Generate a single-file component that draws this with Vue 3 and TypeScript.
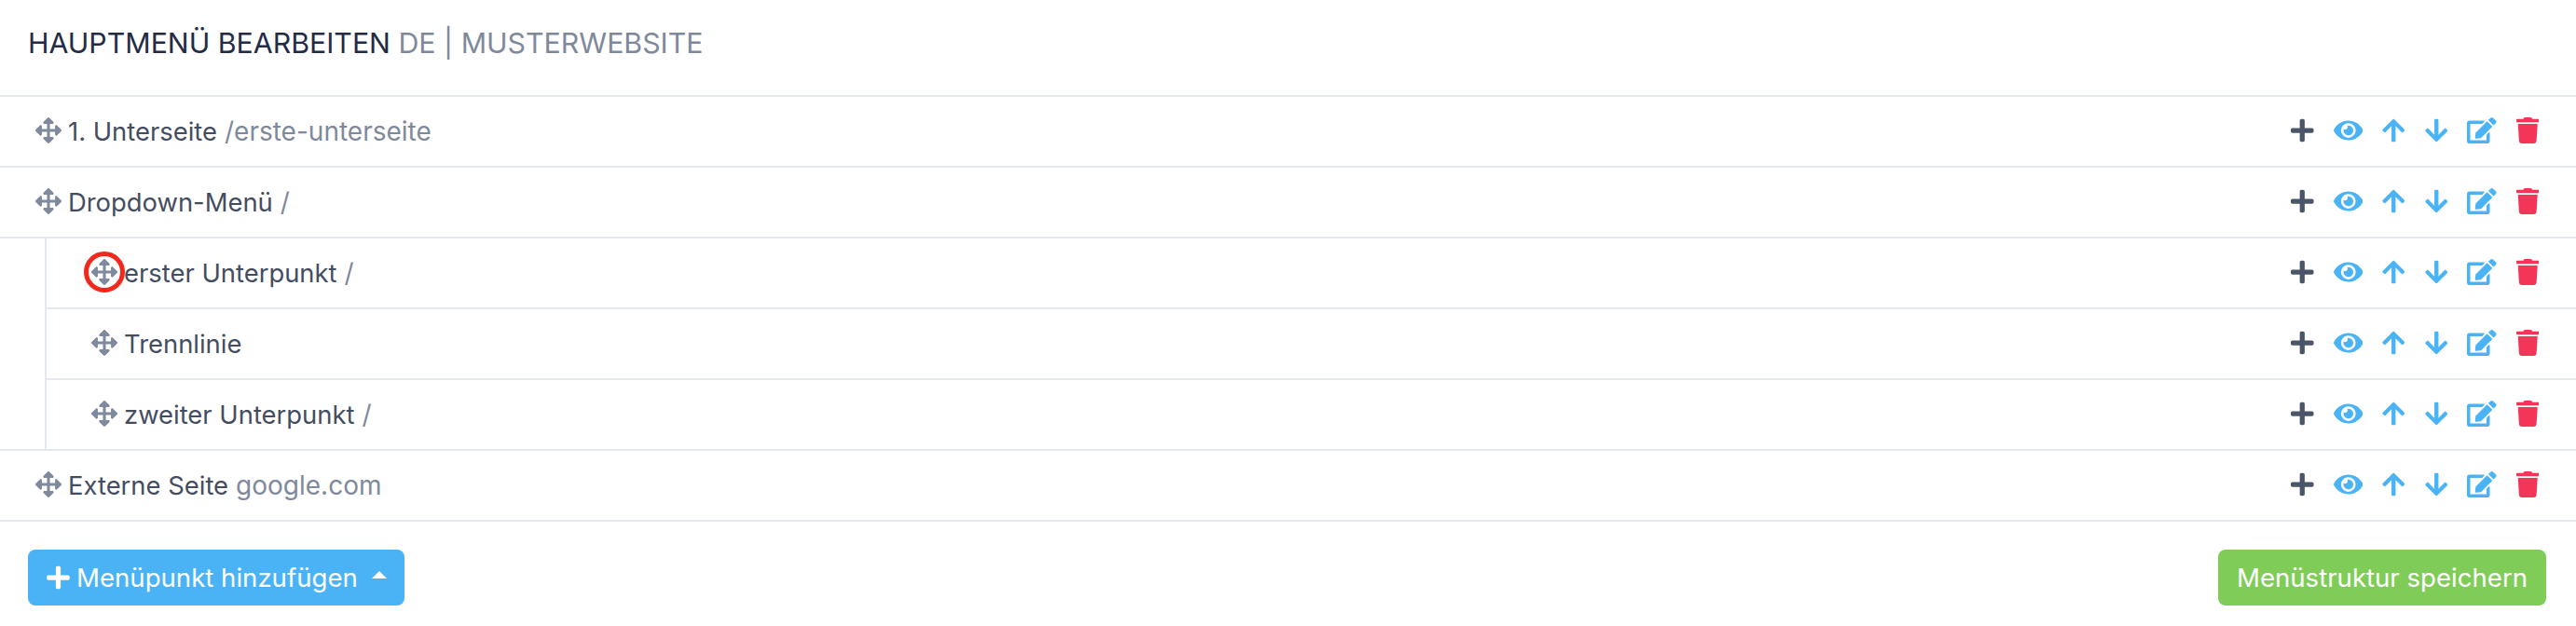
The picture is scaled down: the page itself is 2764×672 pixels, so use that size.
<script setup lang="ts">
interface MenuRow {
  title: string;
  path?: string;
  marked?: boolean;
}

interface MenuSection {
  nested: boolean;
  rows: MenuRow[];
}

const sections: MenuSection[] = [
  {
    nested: false,
    rows: [
      { title: "1. Unterseite", path: "/erste-unterseite" },
      { title: "Dropdown-Menü", path: "/" }
    ]
  },
  {
    nested: true,
    rows: [
      { title: "erster Unterpunkt", path: "/", marked: true },
      { title: "Trennlinie" },
      { title: "zweiter Unterpunkt", path: "/" }
    ]
  },
  {
    nested: false,
    rows: [{ title: "Externe Seite", path: "google.com" }]
  }
];

const icons = {
  plus: "M416 208H272V64c0-17.67-14.33-32-32-32h-32c-17.67 0-32 14.33-32 32v144H32c-17.67 0-32 14.33-32 32v32c0 17.67 14.33 32 32 32h144v144c0 17.67 14.33 32 32 32h32c17.67 0 32-14.33 32-32V304h144c17.67 0 32-14.33 32-32v-32c0-17.67-14.33-32-32-32z",
  move: "M352.201 425.775l-79.196 79.196c-9.373 9.373-24.568 9.373-33.941 0l-79.196-79.196c-15.119-15.119-4.411-40.971 16.971-40.97h51.162L228 284H127.196v51.162c0 21.382-25.851 32.09-40.971 16.971L7.029 272.937c-9.373-9.373-9.373-24.569 0-33.941L86.225 159.8c15.119-15.119 40.971-4.411 40.971 16.971V228H228V127.196h-51.23c-21.382 0-32.09-25.851-16.971-40.971l79.196-79.196c9.373-9.373 24.568-9.373 33.941 0l79.196 79.196c15.119 15.119 4.411 40.971-16.971 40.971h-51.162V228h100.804v-51.162c0-21.382 25.851-32.09 40.97-16.971l79.196 79.196c9.373 9.373 9.373 24.569 0 33.941L425.773 352.2c-15.119 15.119-40.971 4.411-40.97-16.971V284H284v100.804h51.23c21.382 0 32.09 25.851 16.971 40.971z",
  eye: "M572.52 241.4C518.29 135.59 410.93 64 288 64S57.68 135.64 3.48 241.41a32.35 32.35 0 0 0 0 29.19C57.71 376.41 165.07 448 288 448s230.32-71.64 284.52-177.41a32.35 32.35 0 0 0 0-29.19zM288 400a144 144 0 1 1 144-144 143.93 143.93 0 0 1-144 144zm0-240a95.31 95.31 0 0 0-25.31 3.79 47.85 47.85 0 0 1-66.9 66.9A95.78 95.78 0 1 0 288 160z",
  up: "M34.9 289.5l-22.2-22.2c-9.4-9.4-9.4-24.6 0-33.9L207 39c9.4-9.4 24.6-9.4 33.9 0l194.3 194.3c9.4 9.4 9.4 24.6 0 33.9L413 289.4c-9.5 9.5-25 9.3-34.3-.4L264 168.6V456c0 13.3-10.7 24-24 24h-32c-13.3 0-24-10.7-24-24V168.6L69.2 289.1c-9.3 9.8-24.8 10-34.3.4z",
  down: "M413.1 222.5l22.2 22.2c9.4 9.4 9.4 24.6 0 33.9L241 473c-9.4 9.4-24.6 9.4-33.9 0L12.7 278.6c-9.4-9.4-9.4-24.6 0-33.9l22.2-22.2c9.5-9.5 25-9.3 34.3.4L184 343.4V56c0-13.3 10.7-24 24-24h32c13.3 0 24 10.7 24 24v287.4l114.8-120.5c9.3-9.8 24.8-10 34.3-.4z",
  edit: "M402.6 83.2l90.2 90.2c3.8 3.8 3.8 10 0 13.8L274.4 405.6l-92.8 10.3c-12.4 1.4-22.9-9.1-21.5-21.5l10.3-92.8L388.8 83.2c3.8-3.8 10-3.8 13.8 0zm162-22.9l-48.8-48.8c-15.2-15.2-39.9-15.2-55.2 0l-35.4 35.4c-3.8 3.8-3.8 10 0 13.8l90.2 90.2c3.8 3.8 10 3.8 13.8 0l35.4-35.4c15.2-15.3 15.2-40 0-55.2zM384 346.2V448H64V128h229.8c3.2 0 6.2-1.3 8.5-3.5l40-40c7.6-7.6 2.2-20.5-8.5-20.5H48C21.5 64 0 85.5 0 112v352c0 26.5 21.5 48 48 48h352c26.5 0 48-21.5 48-48V306.2c0-10.7-12.9-16-20.5-8.5l-40 40c-2.2 2.3-3.5 5.3-3.5 8.5z",
  trash: "M432 32H312l-9.4-18.7A24 24 0 0 0 281.1 0H166.8a23.72 23.72 0 0 0-21.4 13.3L136 32H16A16 16 0 0 0 0 48v32a16 16 0 0 0 16 16h416a16 16 0 0 0 16-16V48a16 16 0 0 0-16-16zM53.2 467a48 48 0 0 0 47.9 45h245.8a48 48 0 0 0 47.9-45L416 128H32z"
};

const actions = [
  { name: "plus", box: 448, tone: "dark" },
  { name: "eye", box: 576, tone: "blue" },
  { name: "up", box: 448, tone: "blue" },
  { name: "down", box: 448, tone: "blue" },
  { name: "edit", box: 576, tone: "blue" },
  { name: "trash", box: 448, tone: "red" }
] as const;
</script>

<template>
  <div class="page">
    <header class="head">
      <h1>HAUPTMENÜ BEARBEITEN <span>DE | MUSTERWEBSITE</span></h1>
    </header>

    <section
      v-for="(section, i) in sections"
      :key="i"
      class="section"
      :class="{ nested: section.nested }"
    >
      <div class="rows">
        <div v-for="row in section.rows" :key="row.title" class="row">
          <span class="handle" :class="{ marked: row.marked }">
            <svg viewBox="0 0 512 512" class="move"><path :d="icons.move" /></svg>
          </span>
          <span class="title">{{ row.title }}</span>
          <span v-if="row.path" class="path">{{ row.path }}</span>
          <div class="actions">
            <svg
              v-for="a in actions"
              :key="a.name"
              :viewBox="`0 0 ${a.box} 512`"
              class="icon"
              :class="a.tone"
              :style="{ width: (a.box / 512) * 28 + 'px' }"
            >
              <path :d="icons[a.name]" />
            </svg>
          </div>
        </div>
      </div>
    </section>

    <footer class="foot">
      <button class="btn add" type="button">
        <svg viewBox="0 0 448 512" class="btn-plus"><path :d="icons.plus" /></svg>
        <span>Menüpunkt hinzufügen</span>
        <i class="caret"></i>
      </button>
      <button class="btn save" type="button">Menüstruktur speichern</button>
    </footer>
  </div>
</template>

<style>
html,
body {
  margin: 0;
  background: #fff;
}
</style>

<style scoped>
.page {
  width: 2764px;
  height: 672px;
  overflow: hidden;
  background: #fff;
  font-family: Inter, Roboto, sans-serif;
  font-size: 27.4px;
}

.head {
  height: 92px;
  display: flex;
  align-items: center;
  padding: 0 0 10px 30px;
  border-bottom: 2px solid #e2e8f0;
}

h1 {
  margin: 0;
  font-size: 30.3px;
  font-weight: 400;
  color: #232b45;
}

h1 span {
  color: #7f899c;
}

.section.nested {
  border-bottom: 2px solid #e2e8f0;
}

.nested .rows {
  margin-left: 48px;
  border-left: 2px solid #e2e8f0;
}

.row {
  height: 71px;
  display: flex;
  align-items: center;
  padding: 0 40px 3px 38px;
  border-bottom: 2px solid #e2e8f0;
}

.nested .row {
  padding-left: 48px;
}

.nested .row:last-child {
  border-bottom: 0;
}

.handle {
  position: relative;
  display: flex;
  width: 28px;
  height: 28px;
  margin-right: 7px;
}

.move {
  width: 28px;
  height: 28px;
  fill: #7f8a9e;
}

.marked::after {
  content: "";
  position: absolute;
  inset: -8px;
  border: 5px solid #f2281c;
  border-radius: 50%;
}

.title {
  margin-top: 3px;
  color: #444d60;
}

.path {
  margin: 3px 0 0 8px;
  font-size: 28px;
  color: #7f899c;
}

.actions {
  margin-left: auto;
  display: flex;
  align-items: center;
  gap: 21px;
}

.icon {
  height: 28px;
}

.dark {
  fill: #4a5568;
}

.blue {
  fill: #4ab3f6;
}

.red {
  fill: #f43558;
}

.foot {
  display: flex;
  justify-content: space-between;
  padding: 30px 32px 0 30px;
}

.btn {
  height: 60px;
  border: 0;
  border-radius: 8px;
  color: #fff;
  font: inherit;
  font-size: 27.6px;
  white-space: nowrap;
  display: flex;
  align-items: center;
}

.add {
  width: 404px;
  padding: 0 20px;
  background: #4ab3f6;
}

.btn-plus {
  flex: none;
  width: 25px;
  height: 28px;
  fill: #fff;
  margin-right: 7px;
}

.caret {
  flex: none;
  margin-left: 15px;
  margin-bottom: 6px;
  border-left: 8px solid transparent;
  border-right: 8px solid transparent;
  border-bottom: 8px solid #fff;
}

.save {
  width: 352px;
  justify-content: center;
  background: #7fcd58;
}
</style>
